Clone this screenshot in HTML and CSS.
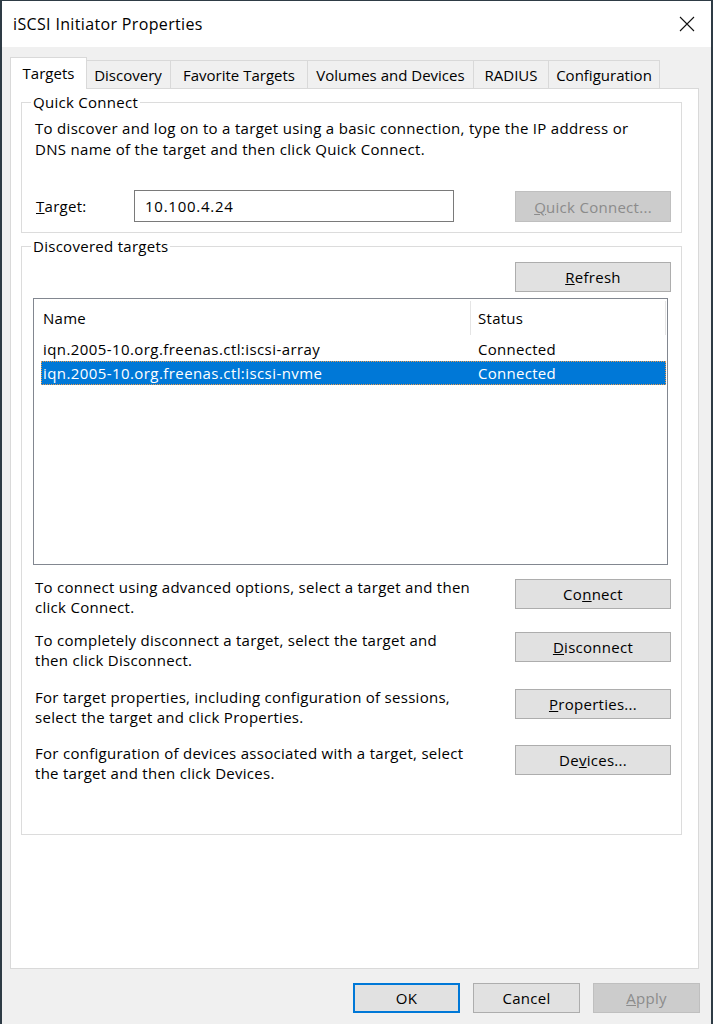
FILE: index.html
```html
<!DOCTYPE html>
<html>
<head>
<meta charset="utf-8">
<link rel="stylesheet" href="styles.css">
</head>
<body>
<div class="window">
  <div class="titlebar">
    <span class="title">iSCSI Initiator Properties</span>
    <svg class="close" width="16" height="16" viewBox="0 0 16 16"><path d="M1 1 L15 15 M15 1 L1 15" stroke="#111" stroke-width="1.1" fill="none"/></svg>
  </div>
  <div class="client">
    <div class="tabs">
      <div class="tab sel w-targets">Targets</div>
      <div class="tab w-disc">Discovery</div>
      <div class="tab w-fav">Favorite Targets</div>
      <div class="tab w-vol">Volumes and Devices</div>
      <div class="tab w-rad">RADIUS</div>
      <div class="tab w-conf">Configuration</div>
    </div>
    <div class="page">
      <fieldset class="group qc">
        <legend>Quick Connect</legend>
        <div class="desc">To discover and log on to a target using a basic connection, type the IP address or<br>DNS name of the target and then click Quick Connect.</div>
        <div class="target-row">
          <span class="target-label"><u>T</u>arget:</span>
          <div class="input">10.100.4.24</div>
          <div class="btn disabled push"><u>Q</u>uick Connect...</div>
        </div>
      </fieldset>
      <fieldset class="group disc">
        <legend>Discovered targets</legend>
        <div class="refresh-row"><div class="btn"><u>R</u>efresh</div></div>
        <div class="list">
          <div class="list-head">
            <div class="hcell name">Name</div>
            <div class="hcell status">Status</div>
          </div>
          <div class="list-row">
            <div class="cell name iqn">iqn.2005-10.org.freenas.ctl:iscsi-array</div>
            <div class="cell status">Connected</div>
          </div>
          <div class="list-row selected">
            <div class="cell name iqn">iqn.2005-10.org.freenas.ctl:iscsi-nvme</div>
            <div class="cell status">Connected</div>
          </div>
        </div>
        <div class="action r1">
          <div class="atext">To connect using advanced options, select a target and then<br>click Connect.</div>
          <div class="btn push">Co<u>n</u>nect</div>
        </div>
        <div class="action r2">
          <div class="atext">To completely disconnect a target, select the target and<br>then click Disconnect.</div>
          <div class="btn push"><u>D</u>isconnect</div>
        </div>
        <div class="action r3">
          <div class="atext">For target properties, including configuration of sessions,<br>select the target and click Properties.</div>
          <div class="btn push"><u>P</u>roperties...</div>
        </div>
        <div class="action r4">
          <div class="atext">For configuration of devices associated with a target, select<br>the target and then click Devices.</div>
          <div class="btn push">De<u>v</u>ices...</div>
        </div>
      </fieldset>
    </div>
    <div class="footer">
      <div class="btn fbtn default">OK</div>
      <div class="btn fbtn">Cancel</div>
      <div class="btn fbtn disabled"><u>A</u>pply</div>
    </div>
  </div>
</div>
</body>
</html>
```
FILE: styles.css
```css
* { box-sizing: border-box; }
html, body { margin: 0; padding: 0; }
body {
  background: #2e3b45;
  width: 713px;
  height: 1024px;
  overflow: hidden;
  font-family: "Open Sans", "Noto Sans", sans-serif;
  font-size: 15px;
  letter-spacing: 0.28px;
  color: #000;
}
.window {
  margin: 1px 2px 0 2px;
  width: 709px;
  height: 1023px;
  background: #f0f0f0;
  display: flex;
  flex-direction: column;
}
.titlebar {
  height: 46px;
  background: #fff;
  display: flex;
  align-items: center;
  padding-left: 11px;
  padding-right: 16px;
  flex: none;
}
.title { font-size: 16px; letter-spacing: 0.35px; }
.close { margin-left: auto; }
.client {
  padding: 10px 11px 0 8px;
  display: flex;
  flex-direction: column;
}
.tabs {
  display: flex;
  align-items: flex-end;
  height: 31px;
  position: relative;
  z-index: 2;
}
.tab {
  height: 28px;
  border: 1px solid #d9d9d9;
  border-bottom: none;
  margin-left: -1px;
  display: flex;
  align-items: center;
  justify-content: center;
  background: #f0f0f0;
  white-space: nowrap;
  letter-spacing: 0;
}
.tab.sel {
  height: 32px;
  margin-left: 0;
  margin-bottom: -1px;
  background: #fff;
  position: relative;
  z-index: 3;
  padding-bottom: 2px;
}
.w-targets { width: 77px; margin-right: -1px; }
.w-disc { width: 86px; }
.w-fav { width: 138px; }
.w-vol { width: 167px; }
.w-rad { width: 76px; }
.w-conf { width: 112px; }

.page {
  height: 881px;
  background: #fff;
  border: 1px solid #d9d9d9;
  margin-right: 1px;
  padding: 3px 16px 0 10px;
  position: relative;
  z-index: 1;
}
.group {
  margin: 0;
  border: 1px solid #dcdcdc;
  padding: 0 10px 10px 13px;
  min-width: 0;
}
.group legend {
  padding: 0 2px;
  margin-left: -4px;
  line-height: 20px;
}
.desc {
  line-height: 21px;
  padding-top: 6px;
  white-space: nowrap;
  letter-spacing: 0.3px;
}
.target-row {
  margin-top: 30px;
  display: flex;
  align-items: center;
  height: 32px;
}
.target-label {
  width: 99px;
  padding-left: 1px;
}
.input {
  width: 320px;
  height: 32px;
  border: 1px solid #7a7a7a;
  padding-left: 10px;
  line-height: 30px;
  letter-spacing: 0.75px;
}
.btn {
  width: 156px;
  height: 30px;
  background: #e1e1e1;
  border: 1px solid #adadad;
  display: flex;
  align-items: center;
  justify-content: center;
  white-space: nowrap;
  flex: none;
}
.btn.disabled {
  background: #cccccc;
  border-color: #bfbfbf;
  color: #8b8b8b;
}
.push { margin-left: auto; }
.target-row .btn { height: 31px; margin-top: 1px; }

.group.disc {
  margin-top: 3px;
  padding-bottom: 51px;
}
.refresh-row {
  display: flex;
  justify-content: flex-end;
  padding-top: 6px;
}
.list {
  margin-top: 6px;
  margin-left: -2px;
  margin-right: 3px;
  height: 267px;
  border: 1px solid #828790;
  background: #fff;
}
.list-head {
  display: flex;
  height: 38px;
}
.hcell {
  display: flex;
  align-items: center;
  margin-top: 2px;
  height: 34px;
}
.hcell.name { width: 436px; padding-left: 9px; }
.hcell.status {
  width: 196px;
  padding-left: 7px;
  border-left: 1px solid #e5e5e5;
  border-right: 1px solid #e5e5e5;
}
.list-row {
  display: flex;
  margin-left: 7px;
  width: 625px;
  height: 24px;
  align-items: center;
}
.list-row.selected {
  background: #0078d7;
  color: #fff;
  outline: 1px dotted #e89a50;
  outline-offset: -1px;
}
.cell.name { width: 429px; padding-left: 2px; }
.cell.iqn { letter-spacing: 0.42px; }
.cell.status { padding-left: 8px; }

.action {
  display: flex;
  align-items: flex-start;
}
.atext {
  line-height: 20px;
  white-space: nowrap;
}
.action .btn { margin-top: 2px; }
.r1 { margin-top: 12px; }
.r2 { margin-top: 13px; }
.r3 { margin-top: 17px; }
.r4 { margin-top: 16px; }

.footer {
  margin-top: 14px;
  display: flex;
  justify-content: flex-end;
  gap: 13px;
}
.fbtn { width: 107px; }
.fbtn.default {
  border: 2px solid #0078d7;
}
```
